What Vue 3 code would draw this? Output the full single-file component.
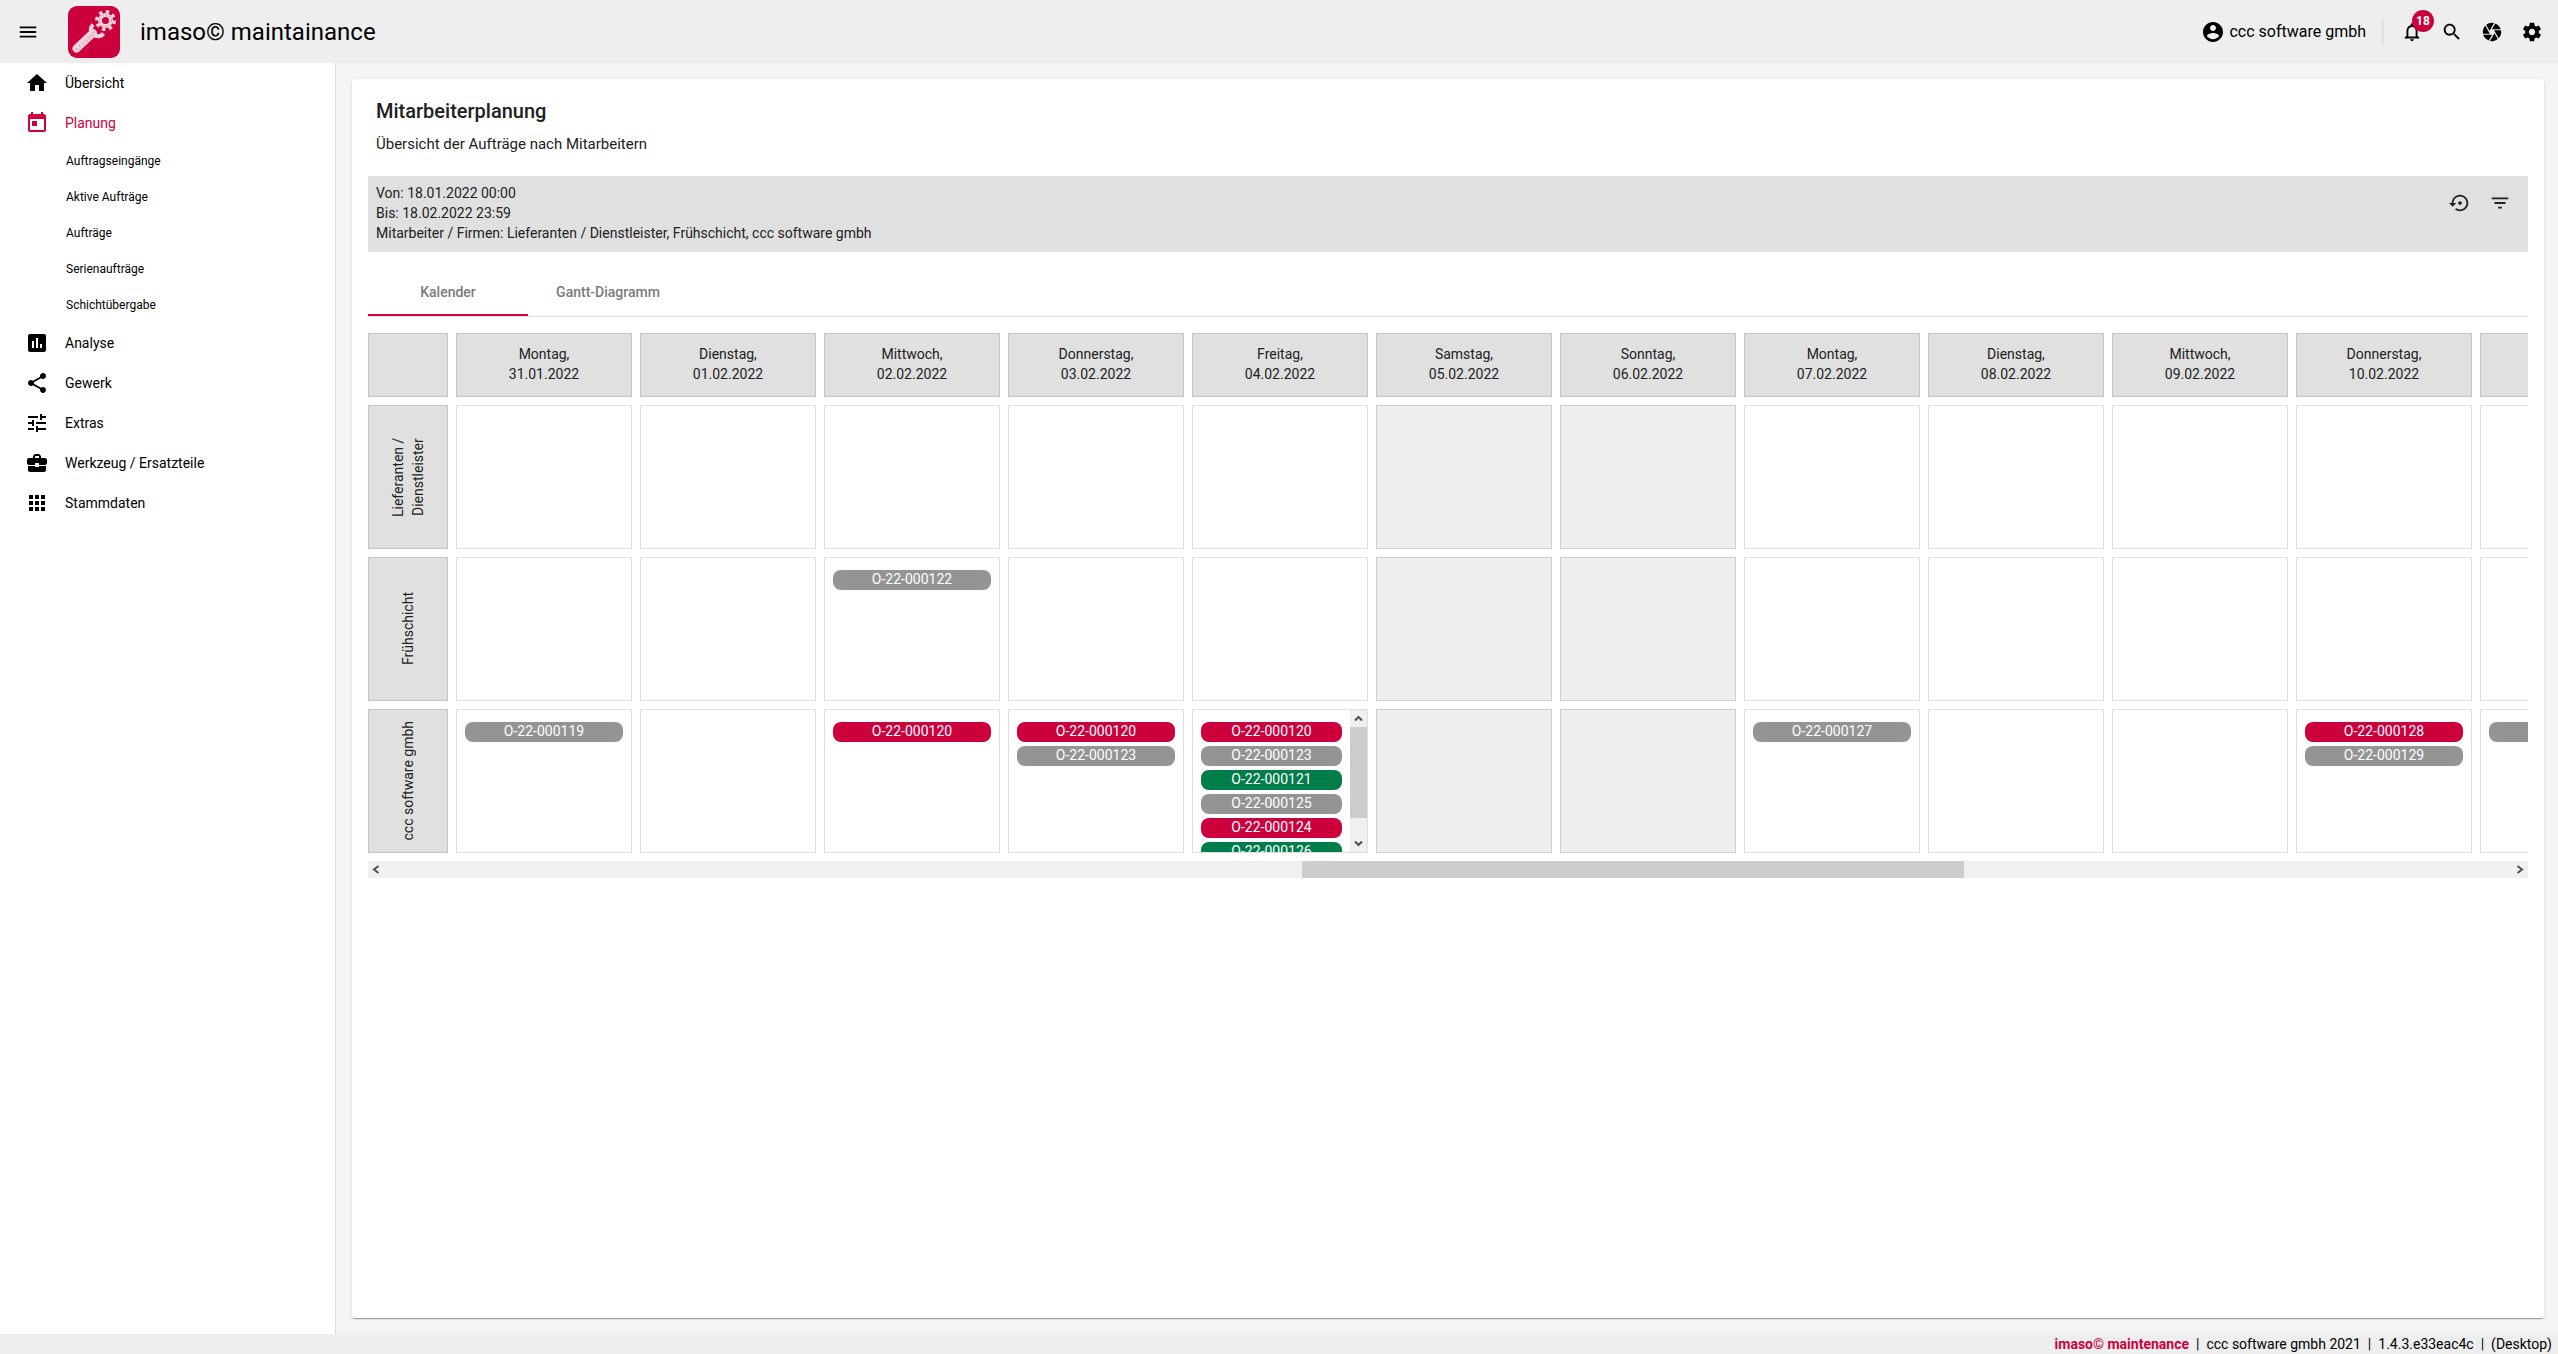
<script setup>
import { ref } from 'vue'

const icons = {
  menu: 'M3 18h18v-2H3v2zm0-5h18v-2H3v2zm0-7v2h18V6H3z',
  home: 'M10 20v-6h4v6h5v-8h3L12 3 2 12h3v8z',
  today: 'M19 3h-1V1h-2v2H8V1H6v2H5c-1.11 0-1.99.9-1.99 2L3 19c0 1.1.89 2 2 2h14c1.1 0 2-.9 2-2V5c0-1.1-.9-2-2-2zm0 16H5V8h14v11zM7 10h5v5H7z',
  assessment: 'M19 3H5c-1.1 0-2 .9-2 2v14c0 1.1.9 2 2 2h14c1.1 0 2-.9 2-2V5c0-1.1-.9-2-2-2zM9 17H7v-7h2v7zm4 0h-2V7h2v10zm4 0h-2v-4h2v4z',
  share: 'M18 16.08c-.76 0-1.44.3-1.96.77L8.91 12.7c.05-.23.09-.46.09-.7s-.04-.47-.09-.7l7.05-4.11c.54.5 1.25.81 2.04.81 1.66 0 3-1.34 3-3s-1.34-3-3-3-3 1.34-3 3c0 .24.04.47.09.7L8.04 9.81C7.5 9.31 6.79 9 6 9c-1.66 0-3 1.34-3 3s1.34 3 3 3c.79 0 1.5-.31 2.04-.81l7.12 4.16c-.05.21-.08.43-.08.65 0 1.61 1.31 2.92 2.92 2.92 1.61 0 2.92-1.31 2.92-2.92s-1.31-2.92-2.92-2.92z',
  tune: 'M3 17v2h6v-2H3zM3 5v2h10V5H3zm10 16v-2h8v-2h-8v-2h-2v6h2zM7 9v2H3v2h4v2h2V9H7zm14 4v-2H11v2h10zm-6-4h2V7h4V5h-4V3h-2v6z',
  toolcase: 'M10 16v-1H3.01L3 19c0 1.11.89 2 2 2h14c1.11 0 2-.89 2-2v-4h-7v1h-4zm10-9h-4.01V5l-2-2h-4l-2 2v2H4c-1.1 0-2 .9-2 2v3c0 1.11.89 2 2 2h6v-2h4v2h6c1.1 0 2-.9 2-2V9c0-1.1-.9-2-2-2zm-6 0h-4V5h4v2z',
  apps: 'M4 8h4V4H4v4zm6 12h4v-4h-4v4zm-6 0h4v-4H4v4zm0-6h4v-4H4v4zm6 0h4v-4h-4v4zm6-10v4h4V4h-4zm-6 4h4V4h-4v4zm6 6h4v-4h-4v4zm0 6h4v-4h-4v4z',
  account: 'M12 2C6.48 2 2 6.48 2 12s4.48 10 10 10 10-4.48 10-10S17.52 2 12 2zm0 3c1.66 0 3 1.34 3 3s-1.34 3-3 3-3-1.34-3-3 1.34-3 3-3zm0 14.2c-2.5 0-4.71-1.28-6-3.22.03-1.99 4-3.08 6-3.08 1.99 0 5.97 1.09 6 3.08-1.29 1.94-3.5 3.22-6 3.22z',
  bell: 'M12 22c1.1 0 2-.9 2-2h-4c0 1.1.9 2 2 2zm6-6v-5c0-3.07-1.63-5.64-4.5-6.32V4c0-.83-.67-1.5-1.5-1.5s-1.5.67-1.5 1.5v.68C7.64 5.36 6 7.92 6 11v5l-2 2v1h16v-1l-2-2zm-2 1H8v-6c0-2.48 1.51-4.5 4-4.5s4 2.02 4 4.5v6z',
  search: 'M15.5 14h-.79l-.28-.27C15.41 12.59 16 11.11 16 9.5 16 5.91 13.09 3 9.5 3S3 5.91 3 9.5 5.91 16 9.5 16c1.61 0 3.09-.59 4.23-1.57l.27.28v.79l5 4.99L20.49 19l-4.99-5zm-6 0C7.01 14 5 11.99 5 9.5S7.01 5 9.5 5 14 7.01 14 9.5 11.99 14 9.5 14z',
  camera: 'M9.4 10.5l4.77-8.26C13.47 2.09 12.75 2 12 2c-2.4 0-4.6.85-6.32 2.25l3.66 6.35.06-.1zM21.54 9c-.92-2.92-3.15-5.26-6-6.34L11.88 9h9.66zm.26 1h-7.49l.29.5 4.76 8.25C21 16.97 22 14.61 22 12c0-.69-.07-1.35-.2-2zM8.54 12l-3.9-6.75C3.01 7.03 2 9.39 2 12c0 .69.07 1.35.2 2h7.49l-1.15-2zm-6.08 3c.92 2.92 3.15 5.26 6 6.34L12.12 15H2.46zm11.27 0l-3.9 6.76c.7.15 1.42.24 2.17.24 2.4 0 4.6-.85 6.32-2.25l-3.66-6.35-.93 1.6z',
  settings: 'M19.43 12.98c.04-.32.07-.64.07-.98s-.03-.66-.07-.98l2.11-1.65c.19-.15.24-.42.12-.64l-2-3.46c-.12-.22-.39-.3-.61-.22l-2.49 1c-.52-.4-1.08-.73-1.69-.98l-.38-2.65C14.46 2.18 14.25 2 14 2h-4c-.25 0-.46.18-.49.42l-.38 2.65c-.61.25-1.17.59-1.69.98l-2.49-1c-.23-.09-.49 0-.61.22l-2 3.46c-.13.22-.07.49.12.64l2.11 1.65c-.04.32-.07.65-.07.98s.03.66.07.98l-2.11 1.65c-.19.15-.24.42-.12.64l2 3.46c.12.22.39.3.61.22l2.49-1c.52.4 1.08.73 1.69.98l.38 2.65c.03.24.24.42.49.42h4c.25 0 .46-.18.49-.42l.38-2.65c.61-.25 1.17-.59 1.69-.98l2.49 1c.23.09.49 0 .61-.22l2-3.46c.12-.22.07-.49-.12-.64l-2.11-1.65zM12 15.5c-1.93 0-3.5-1.57-3.5-3.5s1.57-3.5 3.5-3.5 3.5 1.57 3.5 3.5-1.57 3.5-3.5 3.5z',
  restore: 'M14 12c0-1.1-.9-2-2-2s-2 .9-2 2 .9 2 2 2 2-.9 2-2zm-2-9c-4.97 0-9 4.03-9 9H0l4 4 4-4H5c0-3.87 3.13-7 7-7s7 3.13 7 7-3.13 7-7 7c-1.51 0-2.91-.49-4.06-1.3l-1.42 1.44C8.04 20.3 9.94 21 12 21c4.97 0 9-4.03 9-9s-4.03-9-9-9z',
  filter: 'M10 18h4v-2h-4v2zM3 6v2h18V6H3zm3 7h12v-2H6v2z',
}

const nav = [
  { label: 'Übersicht', icon: 'home' },
  {
    label: 'Planung',
    icon: 'today',
    active: true,
    children: ['Auftragseingänge', 'Aktive Aufträge', 'Aufträge', 'Serienaufträge', 'Schichtübergabe'],
  },
  { label: 'Analyse', icon: 'assessment' },
  { label: 'Gewerk', icon: 'share' },
  { label: 'Extras', icon: 'tune' },
  { label: 'Werkzeug / Ersatzteile', icon: 'toolcase' },
  { label: 'Stammdaten', icon: 'apps' },
]

const tabs = ['Kalender', 'Gantt-Diagramm']
const activeTab = ref('Kalender')

const days = [
  { name: 'Montag', date: '31.01.2022' },
  { name: 'Dienstag', date: '01.02.2022' },
  { name: 'Mittwoch', date: '02.02.2022' },
  { name: 'Donnerstag', date: '03.02.2022' },
  { name: 'Freitag', date: '04.02.2022' },
  { name: 'Samstag', date: '05.02.2022', off: true },
  { name: 'Sonntag', date: '06.02.2022', off: true },
  { name: 'Montag', date: '07.02.2022' },
  { name: 'Dienstag', date: '08.02.2022' },
  { name: 'Mittwoch', date: '09.02.2022' },
  { name: 'Donnerstag', date: '10.02.2022' },
  { name: 'Freitag', date: '11.02.2022' },
]

const resources = [
  { name: 'Lieferanten / Dienstleister', orders: {} },
  { name: 'Frühschicht', orders: { '02.02.2022': [['O-22-000122', 'grey']] } },
  {
    name: 'ccc software gmbh',
    orders: {
      '31.01.2022': [['O-22-000119', 'grey']],
      '02.02.2022': [['O-22-000120', 'red']],
      '03.02.2022': [['O-22-000120', 'red'], ['O-22-000123', 'grey']],
      '04.02.2022': [
        ['O-22-000120', 'red'],
        ['O-22-000123', 'grey'],
        ['O-22-000121', 'green'],
        ['O-22-000125', 'grey'],
        ['O-22-000124', 'red'],
        ['O-22-000126', 'green'],
      ],
      '07.02.2022': [['O-22-000127', 'grey']],
      '10.02.2022': [['O-22-000128', 'red'], ['O-22-000129', 'grey']],
      '11.02.2022': [['O-22-000130', 'grey']],
    },
  },
]

const visibleOrders = 5
const ordersFor = (resource, day) => resource.orders[day.date] ?? []
</script>

<template>
  <div class="app">
    <header class="topbar">
      <button class="icon-btn" type="button" aria-label="Menü">
        <svg class="icon" viewBox="0 0 24 24"><path :d="icons.menu" /></svg>
      </button>
      <svg class="logo" viewBox="0 0 52 52" aria-hidden="true">
        <rect width="52" height="52" rx="9" fill="#cb003d" />
        <g fill="none" stroke="#f0d3dc">
          <path d="M8.500 42.500L25 27" stroke-width="8" stroke-linecap="round" />
          <path d="M25 18.500C22 22 22 26 25 28.500S33 31 35.500 27.500" stroke-width="4" />
          <circle cx="37.500" cy="14.500" r="5.500" stroke-width="4" />
          <circle cx="37.500" cy="14.500" r="8.500" stroke-width="4" stroke-dasharray="3.340 3.336" />
        </g>
        <g fill="none" stroke="#dd7f9a" stroke-linecap="round" stroke-dasharray="1 3">
          <path d="M8 43L26 26" />
          <path d="M10 44L27 28" />
          <circle cx="37.500" cy="14.500" r="6" />
        </g>
      </svg>
      <h1 class="brand">imaso© maintainance</h1>
      <div class="topbar-tools">
        <a class="user" href="#">
          <svg class="icon icon-lg" viewBox="0 0 24 24"><path :d="icons.account" /></svg>
          <span>ccc software gmbh</span>
        </a>
        <span class="divider"></span>
        <button class="icon-btn" type="button" aria-label="Benachrichtigungen">
          <svg class="icon" viewBox="0 0 24 24"><path :d="icons.bell" /></svg>
          <span class="badge">18</span>
        </button>
        <button class="icon-btn" type="button" aria-label="Suche">
          <svg class="icon" viewBox="0 0 24 24"><path :d="icons.search" /></svg>
        </button>
        <button class="icon-btn" type="button" aria-label="Kamera">
          <svg class="icon" viewBox="0 0 24 24"><path :d="icons.camera" /></svg>
        </button>
        <button class="icon-btn" type="button" aria-label="Einstellungen">
          <svg class="icon" viewBox="0 0 24 24"><path :d="icons.settings" /></svg>
        </button>
      </div>
    </header>

    <div class="body">
      <nav class="sidebar">
        <ul>
          <li v-for="item in nav" :key="item.label">
            <a class="nav-item" :class="{ active: item.active }" href="#">
              <svg class="icon icon-lg" viewBox="0 0 24 24"><path :d="icons[item.icon]" /></svg>
              <span>{{ item.label }}</span>
            </a>
            <ul v-if="item.children">
              <li v-for="child in item.children" :key="child">
                <a class="nav-sub" href="#">{{ child }}</a>
              </li>
            </ul>
          </li>
        </ul>
      </nav>

      <main class="content">
        <section class="card">
          <div class="heading">
            <h2>Mitarbeiterplanung</h2>
            <p>Übersicht der Aufträge nach Mitarbeitern</p>
          </div>

          <div class="filter">
            <div class="filter-text">
              <p>Von: 18.01.2022 00:00</p>
              <p>Bis: 18.02.2022 23:59</p>
              <p>Mitarbeiter / Firmen: Lieferanten / Dienstleister, Frühschicht, ccc software gmbh</p>
            </div>
            <div class="filter-actions">
              <button class="icon-btn" type="button" aria-label="Zurücksetzen">
                <svg class="icon" viewBox="0 0 24 24"><path :d="icons.restore" /></svg>
              </button>
              <button class="icon-btn" type="button" aria-label="Filtern">
                <svg class="icon" viewBox="0 0 24 24"><path :d="icons.filter" /></svg>
              </button>
            </div>
          </div>

          <div class="tabs" role="tablist">
            <button
              v-for="tab in tabs"
              :key="tab"
              class="tab"
              :class="{ selected: tab === activeTab }"
              type="button"
              role="tab"
              :aria-selected="tab === activeTab"
              @click="activeTab = tab"
            >
              {{ tab }}
            </button>
          </div>

          <div class="calendar">
            <table>
              <thead>
                <tr>
                  <td class="head"><div class="corner"></div></td>
                  <th v-for="day in days" :key="day.date" class="head" scope="col">
                    <div class="day">{{ day.name }},<br />{{ day.date }}</div>
                  </th>
                </tr>
              </thead>
              <tbody>
                <tr v-for="resource in resources" :key="resource.name">
                  <th class="head" scope="row">
                    <div class="resource"><span>{{ resource.name }}</span></div>
                  </th>
                  <td v-for="day in days" :key="day.date" class="slot" :class="{ off: day.off }">
                    <div class="slot-body">
                      <div class="orders">
                        <a
                          v-for="[id, tone] in ordersFor(resource, day)"
                          :key="id"
                          class="order"
                          :class="tone"
                          href="#"
                        >{{ id }}</a>
                      </div>
                      <div v-if="ordersFor(resource, day).length > visibleOrders" class="scroll vertical">
                        <svg class="arrow" viewBox="0 0 17 17"><path d="M5 10.500L8.500 7L12 10.500" /></svg>
                        <div class="track"><div class="thumb"></div></div>
                        <svg class="arrow" viewBox="0 0 17 17"><path d="M5 6.500L8.500 10L12 6.500" /></svg>
                      </div>
                    </div>
                  </td>
                </tr>
              </tbody>
            </table>
          </div>
          <div class="scroll horizontal">
            <svg class="arrow" viewBox="0 0 17 17"><path d="M10.500 5L6 8.500L10.500 12" /></svg>
            <div class="track"><div class="thumb"></div></div>
            <svg class="arrow" viewBox="0 0 17 17"><path d="M6.500 5L11 8.500L6.500 12" /></svg>
          </div>
        </section>
      </main>
    </div>

    <footer class="footer">
      <strong>imaso© maintenance</strong>
      <span>|</span>
      <span>ccc software gmbh 2021</span>
      <span>|</span>
      <span>1.4.3.e33eac4c</span>
      <span>|</span>
      <span>(Desktop)</span>
    </footer>
  </div>
</template>

<style>
body {
  margin: 0;
  background: #f4f4f4;
}
</style>

<style scoped>
.app {
  display: flex;
  flex-direction: column;
  min-height: 100vh;
  font: 400 14px/20px Roboto, sans-serif;
  color: #000;
}
.app *,
.app *::before,
.app *::after {
  box-sizing: border-box;
}
h1,
h2,
p,
ul {
  margin: 0;
  padding: 0;
}
ul {
  list-style: none;
}
a {
  color: inherit;
  text-decoration: none;
}
button {
  padding: 0;
  border: 0;
  background: none;
  color: inherit;
  font: inherit;
  cursor: pointer;
}
.icon {
  display: block;
  flex: none;
  width: 22px;
  height: 22px;
  fill: currentColor;
}
.icon-lg {
  width: 24px;
  height: 24px;
}
.icon-btn {
  position: relative;
  display: flex;
  align-items: center;
  justify-content: center;
  width: 40px;
  height: 40px;
}

.topbar {
  display: flex;
  align-items: center;
  height: 63px;
  padding: 0 6px 0 8px;
  background: #eee;
}
.logo {
  flex: none;
  width: 52px;
  height: 52px;
  margin: 0 20px;
}
.brand {
  font-size: 24px;
  font-weight: 400;
  line-height: 32px;
}
.topbar-tools {
  display: flex;
  align-items: center;
  margin-left: auto;
}
.user {
  display: flex;
  align-items: center;
  gap: 4px;
  font-size: 16px;
}
.divider {
  width: 2px;
  height: 24px;
  margin: 0 8px 0 16px;
  background: #e0e0e0;
}
.badge {
  position: absolute;
  top: -2px;
  right: -2px;
  width: 22px;
  height: 22px;
  border-radius: 50%;
  background: #cb003d;
  color: #fff;
  font-size: 12px;
  font-weight: 700;
  line-height: 22px;
  text-align: center;
}

.body {
  display: flex;
  flex: 1;
}
.sidebar {
  flex: none;
  width: 336px;
  border-right: 1px solid #dcdcdc;
  background: #fff;
}
.nav-item {
  display: flex;
  align-items: center;
  gap: 16px;
  height: 40px;
  padding-left: 25px;
}
.nav-item.active {
  color: #cb003d;
}
.nav-sub {
  display: block;
  padding-left: 66px;
  font-size: 12px;
  line-height: 36px;
}

.content {
  display: flex;
  flex: 1;
  min-width: 0;
  padding: 16px 14px 16px 16px;
}
.card {
  flex: 1;
  min-width: 0;
  padding: 16px;
  border-radius: 2px;
  background: #fff;
  box-shadow: 0 2px 1px -1px rgba(0, 0, 0, 0.2), 0 1px 1px rgba(0, 0, 0, 0.14),
    0 1px 3px rgba(0, 0, 0, 0.12);
  color: #212121;
}
.heading {
  padding: 0 8px 20px;
}
.heading h2 {
  margin-bottom: 5px;
  font-size: 20px;
  font-weight: 500;
  line-height: 32px;
}
.heading p {
  font-size: 15px;
  line-height: 24px;
}
.filter {
  display: flex;
  justify-content: space-between;
  padding: 7px 8px 9px;
  background: #e0e0e0;
}
.filter-actions {
  display: flex;
}

.tabs {
  display: flex;
  margin: 16px 0;
  border-bottom: 1px solid #dedede;
}
.tab {
  width: 160px;
  height: 48px;
  padding-top: 2px;
  border-bottom: 2px solid transparent;
  color: #7a7a7a;
  font-weight: 500;
}
.tab.selected {
  border-color: #cb003d;
}

.calendar {
  overflow: hidden;
}
table {
  margin: -8px 0 0 -8px;
  border-spacing: 8px;
}
th,
td {
  padding: 0;
  font-weight: 400;
}
.head {
  border: 1px solid #c4c4c4;
  background: #e0e0e0;
}
.corner {
  width: 78px;
  height: 62px;
}
.day {
  width: 174px;
  padding: 10px 0 12px;
}
.resource {
  display: flex;
  align-items: center;
  justify-content: center;
  width: 78px;
  height: 142px;
}
.resource span {
  max-height: 126px;
  writing-mode: vertical-rl;
  transform: rotate(180deg);
}
.slot {
  border: 1px solid #dedede;
}
.slot.off {
  border-color: #cecece;
  background: #eee;
}
.slot-body {
  display: flex;
  width: 174px;
  height: 142px;
}
.orders {
  flex: 1;
  padding: 12px 8px 0;
  overflow: hidden;
}
.order {
  display: block;
  height: 20px;
  margin-bottom: 4px;
  border-radius: 8px;
  color: #fff;
  line-height: 18px;
  text-align: center;
}
.grey {
  background: #949494;
}
.red {
  background: #cb003d;
}
.green {
  background: #007d4b;
}

.scroll {
  display: flex;
  background: #f0f0f0;
}
.track {
  display: flex;
  flex: 1;
}
.thumb {
  background: #cdcdcd;
}
.arrow {
  flex: none;
  width: 17px;
  height: 17px;
  fill: none;
  stroke: #505050;
  stroke-width: 2;
}
.vertical,
.vertical .track {
  flex-direction: column;
}
.vertical .thumb {
  height: 84%;
}
/* offset : thumb : remainder of the scrolled range */
.horizontal .track::before {
  content: '';
  flex: 917;
}
.horizontal .thumb {
  flex: 662;
}
.horizontal .track::after {
  content: '';
  flex: 547;
}

.footer {
  display: flex;
  justify-content: flex-end;
  gap: 7px;
  padding-right: 6px;
  background: #eee;
}
.footer strong {
  color: #cb003d;
  font-weight: 700;
}
</style>
